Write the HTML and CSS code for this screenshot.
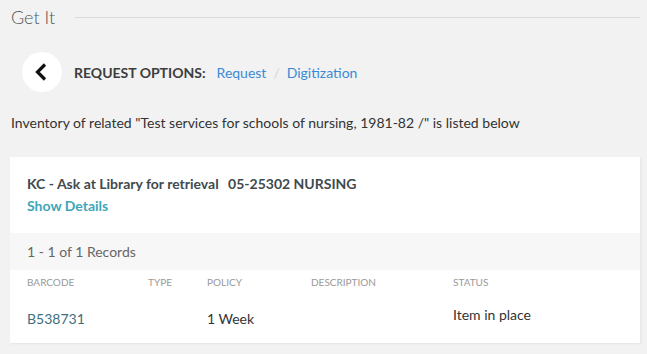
FILE: index.html
```html
<!DOCTYPE html>
<html lang="en">
<head>
    <meta charset="UTF-8">
    <title>Get It</title>
    <link rel="stylesheet" href="styles.css">
</head>
<body>
    <div class="getit">
        <div class="section-head">
            <h2>Get It</h2>
            <span class="rule"></span>
        </div>

        <div class="request-bar">
            <button class="back" aria-label="Back">
                <svg width="16" height="18" viewBox="0 0 16 18">
                    <path d="M11 1.5 L3.5 9 L11 16.5" fill="none" stroke="#111" stroke-width="3.2"/>
                </svg>
            </button>
            <span class="request-label">REQUEST OPTIONS:</span>
            <a href="#" class="opt">Request</a>
            <span class="sep">/</span>
            <a href="#" class="opt">Digitization</a>
        </div>

        <p class="inventory">Inventory of related "Test services for schools of nursing, 1981-82 /" is listed below</p>

        <div class="card">
            <div class="location">
                <div class="loc-title">KC - Ask at Library for retrieval <span class="callno">05-25302 NURSING</span></div>
                <a href="#" class="details">Show Details</a>
            </div>
            <div class="records">1 - 1 of 1 Records</div>
            <table class="items">
                <thead>
                    <tr>
                        <th class="c-barcode">Barcode</th>
                        <th class="c-type">Type</th>
                        <th class="c-policy">Policy</th>
                        <th class="c-desc">Description</th>
                        <th>Status</th>
                    </tr>
                </thead>
                <tbody>
                    <tr>
                        <td><a href="#" class="barcode">B538731</a></td>
                        <td></td>
                        <td>1 Week</td>
                        <td></td>
                        <td class="status">Item in place</td>
                    </tr>
                </tbody>
            </table>
        </div>
    </div>
</body>
</html>
```

FILE: styles.css
```css
body {
    margin: 0;
    background-color: #f2f2f2;
    font-family: 'Lato', 'Open Sans', sans-serif;
    font-size: 14px;
    color: #333;
}
.getit {
    padding: 0 7px 0 11px;
}
.section-head {
    display: flex;
    align-items: center;
    height: 34px;
}
.section-head h2 {
    margin: 0;
    font-size: 18px;
    font-weight: 300;
    color: #555;
}
.rule {
    flex: 1;
    height: 1px;
    background-color: #dadada;
    margin-left: 20px;
}
.request-bar {
    display: flex;
    align-items: center;
    margin-top: 18px;
    height: 40px;
}
.back {
    width: 40px;
    height: 40px;
    border-radius: 50%;
    border: none;
    background-color: #fff;
    margin-left: 11px;
    margin-right: 12px;
    padding: 0;
    display: flex;
    align-items: center;
    justify-content: center;
}
.request-label {
    font-weight: 700;
    color: #3d3d3d;
    margin-right: 11px;
}
.opt {
    color: #3a8ad6;
    text-decoration: none;
}
.sep {
    color: #d5d5d5;
    margin: 0 7px;
}
.inventory {
    margin: 21px 0 0;
    line-height: 20px;
}
.card {
    background-color: #fff;
    margin: 24px 0 11px -1px;
    box-shadow: 1px 1px 2px rgba(0,0,0,0.06);
}
.location {
    padding: 17px 17px 17px;
    line-height: 20px;
}
.loc-title {
    font-weight: 700;
    color: #3f4a4e;
}
.callno {
    margin-left: 6px;
}
.details {
    display: block;
    margin-top: 2px;
    font-weight: 700;
    color: #3fa6b8;
    text-decoration: none;
}
.records {
    background-color: #f7f7f7;
    height: 37px;
    line-height: 37px;
    padding-left: 17px;
    color: #666;
}
.items {
    border-collapse: collapse;
    table-layout: fixed;
    width: 100%;
}
.items th,
.items td {
    box-sizing: border-box;
    padding: 0;
    line-height: 20px;
    text-align: left;
}
.items th {
    font-size: 10px;
    font-weight: 400;
    text-transform: uppercase;
    color: #999;
    height: 24px;
}
.items td {
    height: 49px;
}
.items th:first-child,
.items td:first-child {
    padding-left: 17px;
}
.c-barcode { width: 138px; }
.c-type { width: 59px; }
.c-policy { width: 104px; }
.c-desc { width: 142px; }
.barcode {
    color: #3d6f7c;
    text-decoration: none;
}
.items td.status {
    padding-bottom: 8px;
}
```
